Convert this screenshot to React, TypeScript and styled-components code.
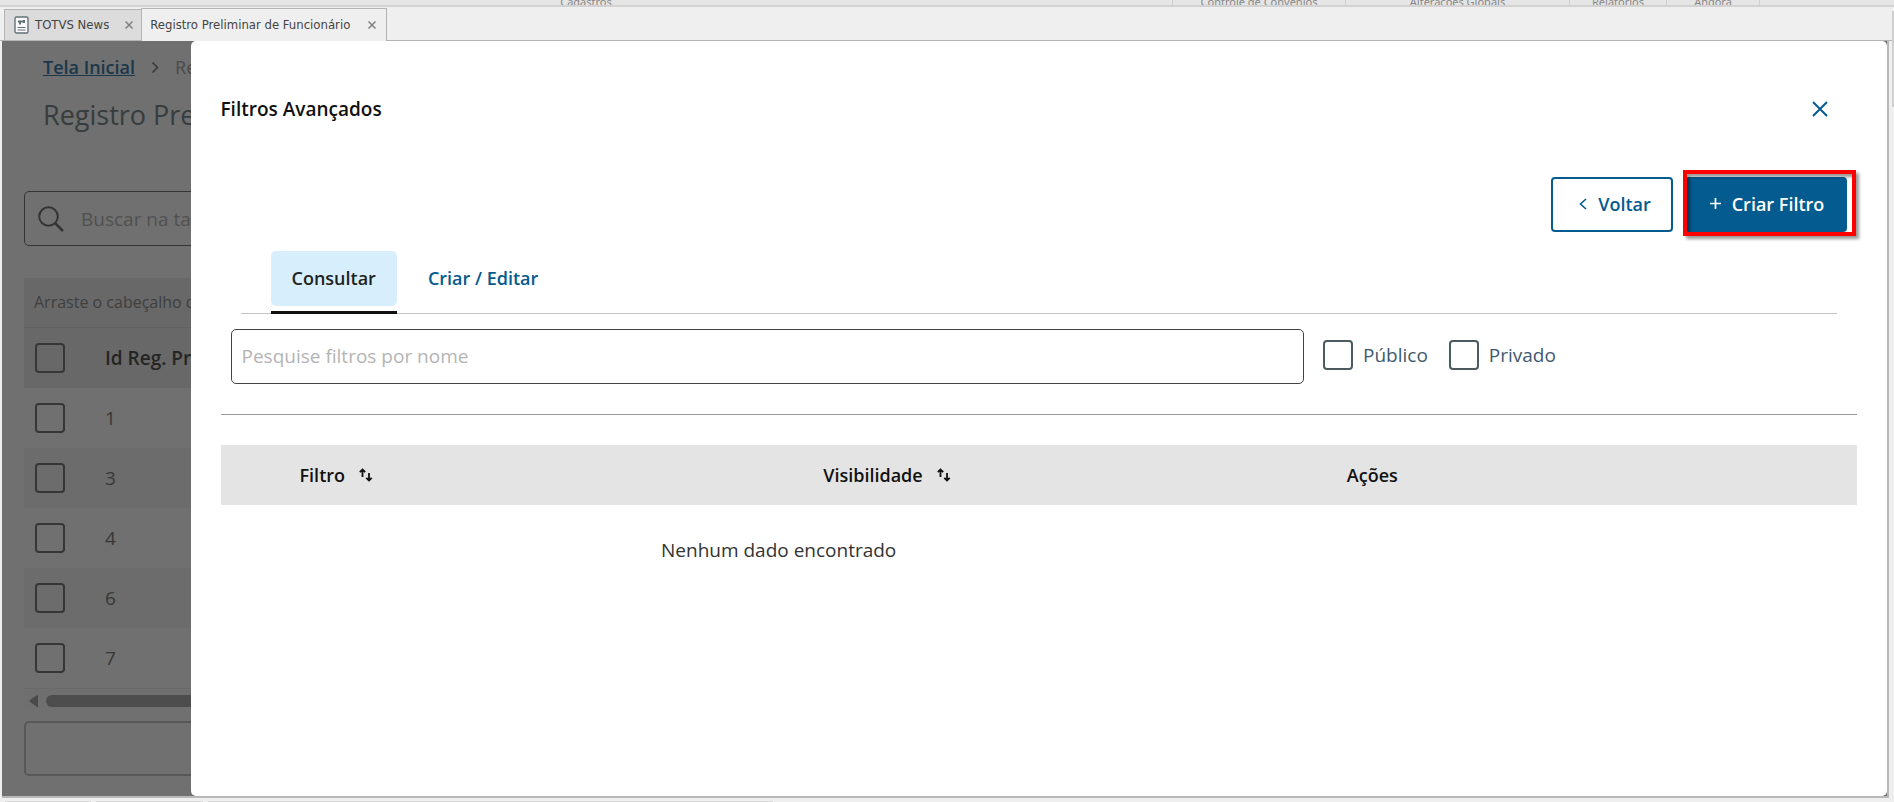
import React, { useState } from "react";
import styled, { createGlobalStyle } from "styled-components";

const GlobalStyle = createGlobalStyle`
  *, *::before, *::after { box-sizing: border-box; }
  body {
    margin: 0;
    background: #efefef;
    font-family: "Open Sans", "Noto Sans", sans-serif;
    font-size: 19px;
    line-height: 24px;
    color: #111;
  }
  button, input { font: inherit; }
`;

const Shell = styled.div`
  display: flex;
  flex-direction: column;
  min-height: 100vh;
`;

/* Ribbon group captions, scrolled almost out of view */
const Ribbon = styled.div`
  display: grid;
  grid-template-columns: 1fr 173px 224px 97px 93px 134px;
  align-items: end;
  height: 7px;
  overflow: hidden;
  background: #e5e5e5;
  border-bottom: 2px solid #d2d2d2;
`;

const RibbonGroup = styled.span`
  height: 16px;
  border-right: 1px solid #cfcfcf;
  font-family: "Noto Sans", sans-serif;
  font-size: 11px;
  line-height: 4px;
  text-align: center;
  color: #888;
  white-space: nowrap;
`;

const DocTabs = styled.div`
  display: flex;
  align-items: flex-end;
  height: 34px;
  padding: 0 0 0 4px;
  border-bottom: 1px solid #b4b4b4;
`;

const DocTab = styled.div<{ $active?: boolean }>`
  display: flex;
  align-items: center;
  gap: ${(p) => (p.$active ? 18 : 6)}px;
  height: ${(p) => (p.$active ? 33 : 31)}px;
  margin-bottom: ${(p) => (p.$active ? -1 : 0)}px;
  padding: 0 ${(p) => (p.$active ? 10 : 8)}px 0 ${(p) => (p.$active ? 8 : 9)}px;
  border: 1px solid #b4b4b4;
  border-width: ${(p) => (p.$active ? "1px 1px 0" : "1px 0 0 1px")};
  background: ${(p) => (p.$active ? "#efefef" : "#dcdcdc")};
  font-family: "DejaVu Sans Condensed", "DejaVu Sans", sans-serif;
  font-size: 13px;
  line-height: 16px;
  color: #444;
  white-space: nowrap;
`;

const DocClose = styled.button<{ $wide?: boolean }>`
  display: flex;
  margin-left: ${(p) => (p.$wide ? 10 : 0)}px;
  padding: 0;
  border: 0;
  background: none;
  color: #808080;
`;

const Workspace = styled.div`
  position: relative;
  flex: 1;
  margin: 0 5px 0 2px;
  overflow: hidden;
  border-right: 2px solid #b8b8b8;
  border-bottom: 2px solid #b8b8b8;
  background: #fff;
`;

const StatusBar = styled.div`
  display: flex;
  gap: 5px;
  height: 4px;
  padding: 3px 0 0 5px;
`;

const StatusPane = styled.div<{ $width: number }>`
  width: ${(p) => p.$width}px;
  background: #dadada;
`;

const BackPage = styled.div`
  padding: 14px 22px 20px;
`;

const Crumbs = styled.nav`
  display: flex;
  align-items: center;
  gap: 16px;
  padding-left: 19px;
  font-size: 18px;
  color: #aaa;
  white-space: nowrap;

  a {
    color: #3f80ab;
    font-weight: 600;
  }
`;

const PageTitle = styled.h1`
  margin: 16px 0 56px;
  padding-left: 19px;
  font-size: 27px;
  font-weight: 400;
  line-height: 40px;
  color: #7e8b8d;
`;

const SearchBox = styled.label`
  display: flex;
  align-items: center;
  gap: 15px;
  height: 55px;
  padding-left: 13px;
  border: 1px solid #777;
  border-radius: 5px;
  color: #777;

  input {
    flex: 1;
    border: 0;
    outline: 0;
    background: none;
  }
  input::placeholder { color: #b8b8b8; }
`;

const GroupHint = styled.div`
  height: 50px;
  margin-top: 32px;
  padding: 12px 10px;
  background: #ececec;
  border-bottom: 1px solid #ddd;
  font-size: 16px;
  color: #909090;
`;

const DataTable = styled.table`
  width: 100%;
  border-collapse: collapse;

  th, td {
    height: 60px;
    padding: 0 0 0 11px;
    text-align: left;
    font-weight: 400;
    color: #808080;
  }
  th { background: #ececec; font-weight: 600; color: #555; }
  th:first-child, td:first-child { width: 70px; }
  tbody tr:nth-child(even) { background: #f6f6f6; }
`;

const Tick = styled.input.attrs({ type: "checkbox" })<{ $color?: string }>`
  appearance: none;
  display: block;
  flex: none;
  width: 30px;
  height: 30px;
  margin: 0;
  border: 2px solid ${(p) => p.$color ?? "#7c7c7c"};
  border-radius: 4px;

  &:checked { background: #045b8f; }
`;

const ScrollTrack = styled.div`
  display: flex;
  align-items: center;
  gap: 8px;
  height: 20px;
  margin-bottom: 13px;
  padding: 5px 0 0 5px;
  border-top: 1px solid #eee;
  background: #fcfcfc;
`;

const ScrollThumb = styled.div`
  flex: 1;
  height: 12px;
  border-radius: 6px;
  background: #b0b0b0;
`;

const LoadMore = styled.button`
  display: block;
  width: 100%;
  height: 55px;
  border: 2px solid #c8c8c8;
  border-radius: 5px;
  background: none;
`;

const Backdrop = styled.div`
  position: absolute;
  inset: 0;
  background: rgba(0, 0, 0, 0.56);
`;

const Panel = styled.section`
  position: absolute;
  inset: 0 0 0 10%;
  padding: 56px 30px 30px;
  border-radius: 5px;
  background: #fff;
`;

const PanelHeader = styled.header`
  display: flex;
  align-items: center;
  justify-content: space-between;
  height: 24px;
  padding-right: 25px;

  h2 {
    margin: 0;
    font-size: 19px;
    font-weight: 600;
  }
`;

const IconButton = styled.button`
  display: flex;
  padding: 4px;
  border: 0;
  background: none;
  color: #045b8f;
`;

const Actions = styled.div`
  display: flex;
  justify-content: flex-end;
  gap: 12px;
  margin: 56px 10px 19px 0;
`;

const ActionButton = styled.button<{ $primary?: boolean }>`
  display: flex;
  align-items: center;
  justify-content: center;
  gap: 11px;
  width: ${(p) => (p.$primary ? 162 : 122)}px;
  height: 55px;
  padding: 0 0 2px ${(p) => (p.$primary ? 2 : 6)}px;
  border: 2px solid #045b8f;
  border-radius: 4px;
  background: ${(p) => (p.$primary ? "#045b8f" : "#fff")};
  color: ${(p) => (p.$primary ? "#fff" : "#045b8f")};
  font-size: 18px;
  font-weight: 600;
  white-space: nowrap;
`;

const Callout = styled.div`
  position: relative;

  &::after {
    content: "";
    position: absolute;
    inset: -7px -9px -4px -2px;
    border: 4px solid #f00;
    box-shadow: 3px 3px 3px rgba(0, 0, 0, 0.4), inset 3px 3px 3px rgba(0, 0, 0, 0.4);
    pointer-events: none;
  }
`;

const Tabs = styled.div`
  display: flex;
  gap: 10px;
  margin: 0 20px 15px;
  padding-left: 30px;
  border-bottom: 1px solid #c4c4c4;
`;

const Tab = styled.button<{ $active: boolean }>`
  margin-bottom: -1px;
  padding: 0 0 5px;
  border: 0;
  border-bottom: 3px solid ${(p) => (p.$active ? "#111" : "transparent")};
  background: none;
  color: ${(p) => (p.$active ? "#222" : "#045b8f")};
  font-size: 18px;
  font-weight: 600;

  span {
    display: block;
    padding: 15px 21px 16px;
    border-radius: 5px;
    background: ${(p) => (p.$active ? "#d7effd" : "none")};
    line-height: 24px;
  }
`;

const FilterRow = styled.div`
  display: grid;
  grid-template-columns: 66% 1fr;
  gap: 19px;
  align-items: center;
  margin-left: 10px;
`;

const TextField = styled.input`
  width: 100%;
  height: 55px;
  padding: 0 10px 2px;
  border: 1px solid #444;
  border-radius: 5px;
  background: #fff;

  &::placeholder { color: #b4b4b4; opacity: 1; }
`;

const Choices = styled.div`
  display: flex;
  gap: 21px;
  padding-bottom: 4px;
`;

const Choice = styled.label`
  display: flex;
  align-items: center;
  gap: 10px;
  color: #3f5a6e;
`;

const Rule = styled.hr`
  margin: 30px 0;
  border: 0;
  border-top: 1px solid #999;
`;

const FilterTable = styled.table`
  width: 100%;
  border-collapse: collapse;
  table-layout: fixed;

  th {
    height: 60px;
    padding: 0;
    background: #e4e4e4;
    text-align: left;
    font-size: 18px;
    font-weight: 600;
  }
  th:first-child { width: 79px; }
  th:nth-child(2), th:nth-child(3) { width: 32%; }
  td {
    height: 90px;
    padding: 0 10px 0 0;
    text-align: center;
    color: #333;
  }
`;

const SortButton = styled.button`
  display: flex;
  align-items: center;
  gap: 14px;
  padding: 0;
  border: 0;
  background: none;
  color: #111;
  font-weight: 600;
`;

const SideScroll = styled.div`
  position: absolute;
  top: 11px;
  right: 0;
  width: 2px;
  height: 96px;
  background: #cfcfcf;
`;

const Cross = ({ size, weight }: { size: number; weight: number }) => (
  <svg width={size} height={size} viewBox="0 0 16 16" fill="none" stroke="currentColor" strokeWidth={weight}>
    <path d="M1 1 15 15M15 1 1 15" />
  </svg>
);

const NewsIcon = () => (
  <svg width="15" height="18" viewBox="0 0 15 18" fill="none" stroke="#637178">
    <rect x="1" y="1" width="13" height="16" rx="1.5" fill="#fafafa" strokeWidth="1.4" />
    <path d="M4 5.5h5M10 4v3M5 7.5h2" strokeWidth="2" />
    <path d="M3.5 11.5h8M3.5 14h8" strokeWidth="1.2" />
  </svg>
);

const SortIcon = () => (
  <svg width="14" height="14" viewBox="0 0 14 14" fill="none" stroke="currentColor" strokeWidth="1.8">
    <path d="M3.500 9V1.500M0.800 4.200 3.500 1.500 6.200 4.200M10 5v7.500M7.300 9.800 10 12.500 12.700 9.800" />
  </svg>
);

const rows = [1, 3, 4, 6, 7];
const tabs = ["Consultar", "Criar / Editar"];

export default function App() {
  const [tab, setTab] = useState(tabs[0]);

  return (
    <Shell>
      <GlobalStyle />
      <Ribbon>
        <RibbonGroup>Cadastros</RibbonGroup>
        <RibbonGroup>Controle de Convênios</RibbonGroup>
        <RibbonGroup>Alterações Globais</RibbonGroup>
        <RibbonGroup>Relatórios</RibbonGroup>
        <RibbonGroup>Ahgora</RibbonGroup>
      </Ribbon>
      <DocTabs>
        <DocTab>
          <NewsIcon />
          TOTVS News
          <DocClose $wide aria-label="Fechar TOTVS News">
            <Cross size={8} weight={3} />
          </DocClose>
        </DocTab>
        <DocTab $active>
          Registro Preliminar de Funcionário
          <DocClose aria-label="Fechar Registro Preliminar">
            <Cross size={8} weight={3} />
          </DocClose>
        </DocTab>
      </DocTabs>
      <SideScroll />

      <Workspace>
        <BackPage>
          <Crumbs>
            <a href="#inicio">Tela Inicial</a>
            <svg width="8" height="13" viewBox="0 0 8 13" fill="none" stroke="#808080" strokeWidth="1.6">
              <path d="M1.500 1.500 6.500 6.500 1.500 11.500" />
            </svg>
            <span>Registro Preliminar de Funcionário</span>
          </Crumbs>
          <PageTitle>Registro Preliminar de Funcionário</PageTitle>
          <SearchBox>
            <svg width="26" height="26" viewBox="0 0 26 26" fill="none" stroke="currentColor" strokeWidth="2">
              <circle cx="10.500" cy="10.500" r="9.300" />
              <path d="M17 17 25 25" strokeWidth="2.500" />
            </svg>
            <input placeholder="Buscar na tabela" aria-label="Buscar na tabela" />
          </SearchBox>
          <GroupHint>Arraste o cabeçalho de uma coluna para agrupar</GroupHint>
          <DataTable>
            <thead>
              <tr>
                <th><Tick aria-label="Selecionar todos" /></th>
                <th>Id Reg. Preliminar</th>
              </tr>
            </thead>
            <tbody>
              {rows.map((id) => (
                <tr key={id}>
                  <td><Tick aria-label={`Selecionar ${id}`} /></td>
                  <td>{id}</td>
                </tr>
              ))}
            </tbody>
          </DataTable>
          <ScrollTrack>
            <svg width="9" height="12" viewBox="0 0 9 12" fill="#a8a8a8">
              <path d="M8 0Q9 0 9 1V11Q9 12 8 12L1 7Q0 6 1 5Z" />
            </svg>
            <ScrollThumb />
          </ScrollTrack>
          <LoadMore aria-label="Carregar mais" />
        </BackPage>

        <Backdrop />

        <Panel role="dialog" aria-labelledby="panel-title">
          <PanelHeader>
            <h2 id="panel-title">Filtros Avançados</h2>
            <IconButton aria-label="Fechar">
              <Cross size={16} weight={2} />
            </IconButton>
          </PanelHeader>
          <Actions>
            <ActionButton>
              <svg width="8" height="12" viewBox="0 0 8 12" fill="none" stroke="currentColor" strokeWidth="1.6">
                <path d="M7 1 1.500 6 7 11" />
              </svg>
              Voltar
            </ActionButton>
            <Callout>
              <ActionButton $primary>
                <svg width="11" height="11" viewBox="0 0 11 11" fill="none" stroke="currentColor" strokeWidth="1.700">
                  <path d="M5.500 0v11M0 5.500h11" />
                </svg>
                Criar Filtro
              </ActionButton>
            </Callout>
          </Actions>
          <Tabs role="tablist">
            {tabs.map((name) => (
              <Tab key={name} role="tab" aria-selected={tab === name} $active={tab === name} onClick={() => setTab(name)}>
                <span>{name}</span>
              </Tab>
            ))}
          </Tabs>
          <FilterRow>
            <TextField placeholder="Pesquise filtros por nome" aria-label="Pesquise filtros por nome" />
            <Choices>
              <Choice><Tick $color="#4a5c60" />Público</Choice>
              <Choice><Tick $color="#4a5c60" />Privado</Choice>
            </Choices>
          </FilterRow>
          <Rule />
          <FilterTable>
            <thead>
              <tr>
                <th aria-label="Seleção" />
                <th><SortButton>Filtro<SortIcon /></SortButton></th>
                <th><SortButton>Visibilidade<SortIcon /></SortButton></th>
                <th>Ações</th>
              </tr>
            </thead>
            <tbody>
              <tr>
                <td colSpan={3}>Nenhum dado encontrado</td>
                <td />
              </tr>
            </tbody>
          </FilterTable>
        </Panel>
      </Workspace>
      <StatusBar>
        <StatusPane $width={86} />
        <StatusPane $width={107} />
        <StatusPane $width={565} />
      </StatusBar>
    </Shell>
  );
}
